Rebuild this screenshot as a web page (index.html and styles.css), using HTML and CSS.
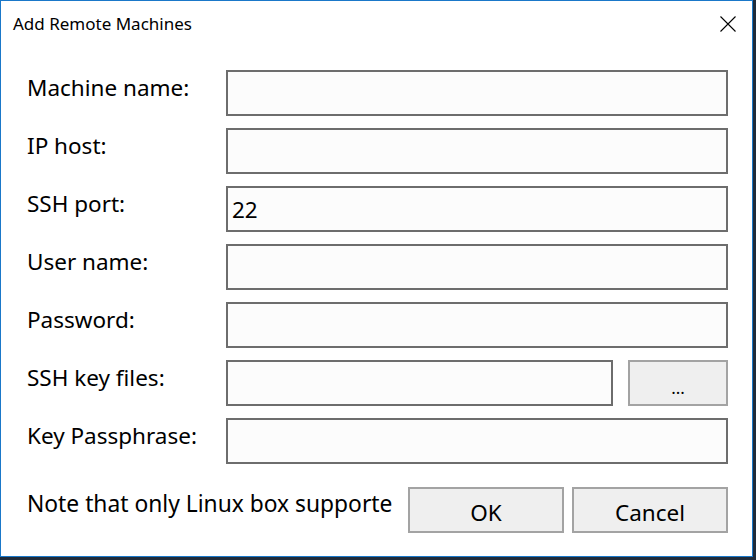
FILE: index.html
```html
<!DOCTYPE html>
<html>
<head>
<meta charset="utf-8">
<link rel="stylesheet" href="styles.css">
</head>
<body>
<div class="window">
  <div class="titlebar">
    <span class="title">Add Remote Machines</span>
    <span class="close">
      <svg width="16" height="16" viewBox="0 0 16 16"><path d="M0.5 0.5 L15.5 15.5 M15.5 0.5 L0.5 15.5" stroke="#000" stroke-width="1.1" fill="none"/></svg>
    </span>
  </div>
  <div class="form">
    <label class="label">Machine name:</label>
    <div class="field"><input class="input" type="text"></div>
    <label class="label">IP host:</label>
    <div class="field"><input class="input" type="text"></div>
    <label class="label">SSH port:</label>
    <div class="field"><input class="input" type="text" value="22"></div>
    <label class="label">User name:</label>
    <div class="field"><input class="input" type="text"></div>
    <label class="label">Password:</label>
    <div class="field"><input class="input" type="password"></div>
    <label class="label">SSH key files:</label>
    <div class="field keyfield"><input class="input keyinput" type="text"><button class="btn browse">...</button></div>
    <label class="label">Key Passphrase:</label>
    <div class="field"><input class="input" type="password"></div>
  </div>
  <div class="footer">
    <div class="note">Note that only Linux box supporte</div>
    <div class="actions">
      <button class="btn action">OK</button>
      <button class="btn action">Cancel</button>
    </div>
  </div>
</div>
</body>
</html>
```

FILE: styles.css
```css
html, body {
  margin: 0;
  padding: 0;
}
body {
  background: #1f2b3a;
  width: 756px;
  height: 560px;
  overflow: hidden;
  font-family: "Noto Sans", "Open Sans", sans-serif;
  color: #000;
}
.window {
  box-sizing: border-box;
  width: 753px;
  height: 557px;
  background: #fff;
  border: 1px solid #1a78c9;
}
.titlebar {
  height: 48px;
  display: flex;
  align-items: flex-start;
  justify-content: space-between;
}
.title {
  font-size: 17px;
  margin-left: 12px;
  margin-top: 11px;
  line-height: 24px;
}
.close {
  margin-top: 15px;
  margin-right: 16px;
  width: 16px;
  height: 16px;
  display: block;
}
.close svg { display: block; }
.form {
  margin-top: 21px;
  padding: 0 24px 0 26px;
  display: grid;
  grid-template-columns: 199px 1fr;
  grid-auto-rows: 46px;
  row-gap: 12px;
}
.label {
  font-size: 22.5px;
  line-height: 32px;
  padding-top: 2px;
}
.field {
  display: flex;
}
.keyfield {
  gap: 15px;
}
.input {
  box-sizing: border-box;
  width: 100%;
  height: 46px;
  margin: 0;
  border: 2px solid #6d6d6d;
  background: #fcfcfc;
  font-family: inherit;
  font-size: 22.5px;
  padding: 0 4px;
  color: #000;
  outline: none;
}
.keyinput {
  width: 387px;
  flex: none;
}
.btn {
  box-sizing: border-box;
  height: 46px;
  margin: 0;
  border: 2px solid #a3a3a3;
  background: #efefef;
  font-family: inherit;
  font-size: 22.5px;
  color: #000;
  padding: 0;
}
.browse {
  width: 100px;
  font-size: 17px;
  padding-top: 8px;
}
.footer {
  margin-top: 23px;
  padding: 0 24px 0 26px;
  display: flex;
  justify-content: space-between;
  align-items: flex-start;
}
.note {
  font-size: 22.8px;
  line-height: 32px;
  padding-top: 1px;
  white-space: nowrap;
  overflow: hidden;
  width: 370px;
}
.actions {
  display: flex;
  gap: 8px;
}
.action {
  width: 156px;
  padding-top: 4px;
}
```
